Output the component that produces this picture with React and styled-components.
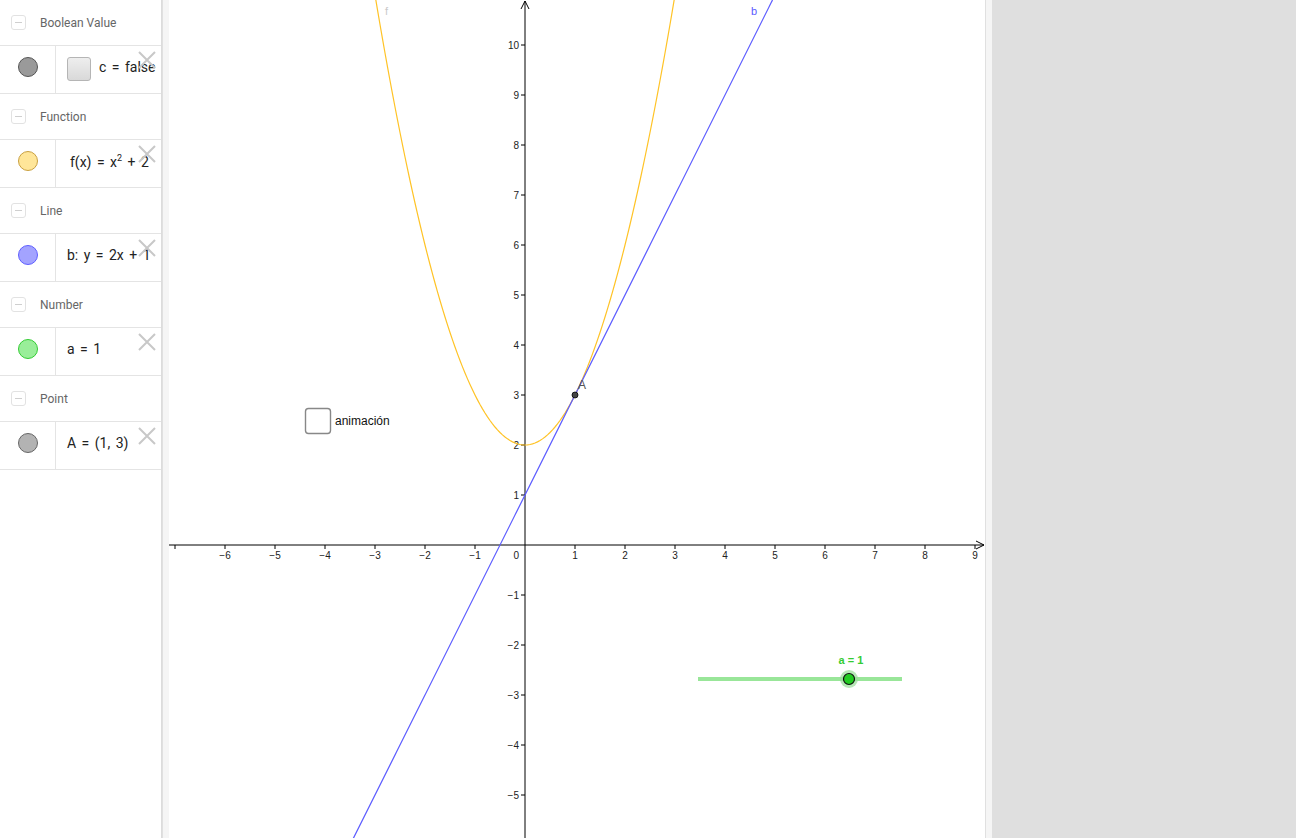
import React from "react";
import styled, { createGlobalStyle } from "styled-components";

const GlobalStyle = createGlobalStyle`
  html, body {
    margin: 0;
    padding: 0;
    height: 100%;
    overflow: hidden;
    background: #fff;
  }
  #root {
    height: 100%;
  }
`;

const Page = styled.div`
  display: flex;
  width: 1296px;
  height: 838px;
  font-family: Roboto, "Liberation Sans", sans-serif;
`;

const AlgebraPanel = styled.div`
  width: 161px;
  flex: none;
  border-right: 1px solid #dcdcdc;
  background: #fff;
  display: flex;
  flex-direction: column;
`;

const Splitter = styled.div`
  width: 6px;
  flex: none;
  background: #f5f5f5;
  border-left: 1px solid #e0e0e0;
`;

const GraphicsView = styled.div`
  width: 816px;
  flex: none;
  position: relative;
  background: #fff;
`;

const EmptyArea = styled.div`
  flex: 1;
  background: #dfdfdf;
`;

const GroupHeader = styled.div`
  height: 45px;
  border-bottom: 1px solid #e4e4e4;
  display: flex;
  align-items: center;
  padding-left: 11px;
  gap: 14px;
  font-size: 12px;
  color: #666;
`;

const CollapseBox = styled.div`
  width: 13px;
  height: 13px;
  border: 1px solid #e2e2e2;
  border-radius: 3px;
  display: flex;
  align-items: center;
  justify-content: center;
  &::after {
    content: "";
    width: 7px;
    height: 1.5px;
    background: #cfcfcf;
  }
`;

const ItemRow = styled.div`
  position: relative;
  height: 47px;
  border-bottom: 1px solid #e4e4e4;
  display: flex;
`;

const MarbleCell = styled.div`
  width: 56px;
  flex: none;
  border-right: 1px solid #e4e4e4;
  display: flex;
  align-items: center;
  justify-content: center;
  padding-bottom: 5px;
  box-sizing: border-box;
`;

const Marble = styled.div`
  width: 18px;
  height: 18px;
  border-radius: 50%;
  background: ${(p) => p.fill};
  border: 1px solid ${(p) => p.stroke};
`;

const Formula = styled.div`
  display: flex;
  align-items: center;
  padding-left: ${(p) => p.pad || 11}px;
  padding-bottom: 5px;
  font-size: 14px;
  color: #222;
  white-space: nowrap;
  word-spacing: 2px;
  gap: 8px;
`;

const BoolBox = styled.div`
  width: 22px;
  height: 22px;
  border: 1px solid #b5b5b5;
  border-radius: 3px;
  background: linear-gradient(#eeeeee, #d9d9d9);
  margin-top: 4px;
`;

const CloseBtn = styled.div`
  position: absolute;
  right: 5px;
  top: 5px;
  width: 18px;
  height: 18px;
`;

const Sup = styled.sup`
  font-size: 9px;
  vertical-align: 6px;
`;

const CloseIcon = () => (
  <CloseBtn>
    <svg width="18" height="18" viewBox="0 0 18 18">
      <path d="M1 1 L17 17 M17 1 L1 17" stroke="#c8c8c8" strokeWidth="2" />
    </svg>
  </CloseBtn>
);

const items = [
  {
    group: "Boolean Value",
    fill: "#9a9a9a",
    stroke: "#555",
    content: (
      <Formula pad={11}>
        <BoolBox />
        <span>c = false</span>
      </Formula>
    ),
  },
  {
    group: "Function",
    fill: "#ffe699",
    stroke: "#c9a040",
    content: (
      <Formula pad={14}>
        <span>
          f(x) = x<Sup>2</Sup> + 2
        </span>
      </Formula>
    ),
  },
  {
    group: "Line",
    fill: "#a3a3ff",
    stroke: "#5f5fff",
    content: (
      <Formula>
        <span>b: y = 2x + 1</span>
      </Formula>
    ),
  },
  {
    group: "Number",
    fill: "#99ee99",
    stroke: "#33cc33",
    content: (
      <Formula>
        <span>a = 1</span>
      </Formula>
    ),
  },
  {
    group: "Point",
    fill: "#b3b3b3",
    stroke: "#666",
    content: (
      <Formula>
        <span>A = (1, 3)</span>
      </Formula>
    ),
  },
];

// graphics coordinates
const OX = 356;
const OY = 545;
const S = 50;
const W = 816;
const H = 838;
const px = (x) => OX + x * S;
const py = (y) => OY - y * S;
const minus = (n) => (n < 0 ? "\u2212" + Math.abs(n) : String(n));
const FONT = "'Liberation Sans', Arial, sans-serif";

const parabola = () => {
  const pts = [];
  for (let x = -3.1; x <= 3.1; x += 0.05) {
    pts.push(`${px(x).toFixed(2)},${py(x * x + 2).toFixed(2)}`);
  }
  return "M" + pts.join(" L");
};

const Graphics = () => {
  const xs = [];
  for (let i = -7; i <= 9; i++) if (i !== 0) xs.push(i);
  const ys = [];
  for (let i = -5; i <= 10; i++) if (i !== 0) ys.push(i);
  const lineX1 = (10.9 - 1) / 2;
  const lineX2 = (-6 - 1) / 2;
  return (
    <svg width={W} height={H} style={{ display: "block" }}>
      <g fontFamily={FONT} fontSize="10" fill="#222">
        {xs.map((i) => (
          <g key={"x" + i}>
            <line x1={px(i)} y1={OY} x2={px(i)} y2={OY + 4} stroke="#000" />
            {i >= -6 && (
              <text x={px(i)} y={OY + 14} textAnchor="middle">
                {minus(i)}
              </text>
            )}
          </g>
        ))}
        {ys.map((i) => (
          <g key={"y" + i}>
            <line x1={OX - 4} y1={py(i)} x2={OX} y2={py(i)} stroke="#000" />
            <text x={OX - 6} y={py(i) + 4} textAnchor="end">
              {minus(i)}
            </text>
          </g>
        ))}
        <text x={OX - 6} y={OY + 14} textAnchor="end">
          0
        </text>
      </g>
      <line x1={0} y1={OY} x2={W - 1} y2={OY} stroke="#000" />
      <path d={`M${W - 9} ${OY - 4} L${W - 1} ${OY} L${W - 9} ${OY + 4}`} fill="none" stroke="#000" />
      <line x1={OX} y1={1} x2={OX} y2={H} stroke="#000" />
      <path d={`M${OX - 4} ${9} L${OX} ${1} L${OX + 4} ${9}`} fill="none" stroke="#000" />

      <path d={parabola()} fill="none" stroke="#ffc326" strokeWidth="1.2" />
      <line x1={px(lineX1)} y1={py(10.9)} x2={px(lineX2)} y2={py(-6)} stroke="#5a5aff" strokeWidth="1.2" />

      <text x={216} y={15} fontFamily={FONT} fontSize="11" fill="#c9c9c9">
        f
      </text>
      <text x={582} y={15} fontFamily={FONT} fontSize="11" fill="#5a5aff">
        b
      </text>

      <circle cx={px(1)} cy={py(3)} r="3" fill="#444" stroke="#000" strokeWidth="0.8" />
      <text x={409} y={389} fontFamily={FONT} fontSize="12" fill="#555">
        A
      </text>

      <rect x={136.5} y={408.5} width={25} height={25} rx={3} fill="#fff" stroke="#888" strokeWidth="1.4" />
      <text x={166} y={425} fontFamily={FONT} fontSize="12" fill="#111">
        animación
      </text>

      <line x1={529} y1={679} x2={733} y2={679} stroke="#99e699" strokeWidth="4" />
      <circle cx={680} cy={679} r="9" fill="#99dd99" opacity="0.7" />
      <circle cx={680} cy={679} r="5.5" fill="#22cc22" stroke="#111" strokeWidth="1.2" />
      <text x={682} y={664} textAnchor="middle" fontFamily={FONT} fontSize="11" fontWeight="bold" fill="#33cc33">
        a = 1
      </text>
    </svg>
  );
};

const App = () => (
  <>
    <GlobalStyle />
    <Page>
      <AlgebraPanel>
        {items.map((it) => (
          <React.Fragment key={it.group}>
            <GroupHeader>
              <CollapseBox />
              <span>{it.group}</span>
            </GroupHeader>
            <ItemRow>
              <MarbleCell>
                <Marble fill={it.fill} stroke={it.stroke} />
              </MarbleCell>
              {it.content}
              <CloseIcon />
            </ItemRow>
          </React.Fragment>
        ))}
      </AlgebraPanel>
      <Splitter />
      <GraphicsView>
        <Graphics />
      </GraphicsView>
      <Splitter />
      <EmptyArea />
    </Page>
  </>
);

export default App;
